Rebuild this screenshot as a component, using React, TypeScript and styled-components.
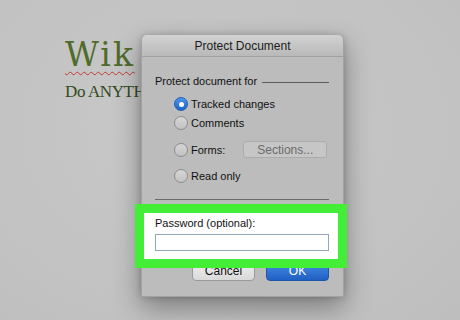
import styled, { createGlobalStyle } from 'styled-components';

const GlobalStyle = createGlobalStyle`
  html, body {
    margin: 0;
    padding: 0;
    background: #c4c4c4;
  }
  body {
    width: 460px;
    height: 320px;
    overflow: hidden;
    font-family: "Liberation Sans", Arial, sans-serif;
  }
`;

const Stage = styled.div`
  position: relative;
  width: 460px;
  height: 320px;
  box-sizing: border-box;
  padding: 38px 0 0 65px;
  background: radial-gradient(ellipse at 45% 40%, #c9c9c9 0%, #c3c3c3 60%, #bebebe 100%);
`;

// document text that sits behind the dialog
const DocArea = styled.div`
  width: 76px;
`;

const DocTitle = styled.div`
  font-family: "DejaVu Serif", "Liberation Serif", serif;
  font-size: 33px;
  line-height: 34px;
  letter-spacing: 2px;
  color: #4f6c2b;
  text-decoration: underline wavy #c0392b;
  text-decoration-thickness: 1px;
  text-underline-offset: 5px;
  white-space: nowrap;
`;

const DocSubtitle = styled.div`
  margin-top: 11px;
  font-family: "Liberation Serif", "Times New Roman", serif;
  font-size: 17px;
  line-height: 18px;
  letter-spacing: -0.4px;
  color: #34491a;
  white-space: nowrap;
`;

const Dialog = styled.div`
  position: absolute;
  left: 141px;
  top: 35px;
  width: 203px;
  height: 262px;
  box-sizing: border-box;
  background: #bcbcbc;
  border: 1px solid #a2a2a2;
  border-top: none;
  border-radius: 5px 5px 0 0;
  box-shadow: 0 10px 28px rgba(0, 0, 0, 0.38), 0 0 6px rgba(0, 0, 0, 0.18);
  display: flex;
  flex-direction: column;
`;

const TitleBar = styled.div`
  height: 22px;
  padding-top: 1px;
  box-sizing: border-box;
  border-bottom: 1px solid #a0a0a0;
  border-radius: 5px 5px 0 0;
  background: linear-gradient(#d2d2d2, #b9b9b9);
  display: flex;
  align-items: center;
  justify-content: center;
  font-size: 12px;
  color: #1b1b1b;
`;

const Body = styled.div`
  padding: 17px 14px 15px 13px;
  display: flex;
  flex-direction: column;
`;

const GroupHeader = styled.div`
  height: 14px;
  display: flex;
  align-items: center;
  font-size: 11px;
  color: #111;
  white-space: nowrap;

  &::after {
    content: '';
    flex: 1;
    height: 1px;
    margin-left: 5px;
    margin-top: 3px;
    background: #5c5c5c;
  }
`;

const RadioList = styled.div`
  margin-top: 9px;
  padding-left: 19px;
  display: flex;
  flex-direction: column;
`;

const RadioRow = styled.label<{ $gap: number; $tall?: boolean }>`
  margin-top: ${p => p.$gap}px;
  height: ${p => (p.$tall ? 17 : 14)}px;
  display: flex;
  align-items: center;
  gap: 3px;
  font-size: 11px;
  color: #111;
  white-space: nowrap;
`;

const Radio = styled.span<{ $on?: boolean }>`
  width: 14px;
  height: 14px;
  box-sizing: border-box;
  border-radius: 50%;
  flex: none;
  display: flex;
  align-items: center;
  justify-content: center;
  border: 1px solid ${p => (p.$on ? '#1f5fb8' : '#8c8c8c')};
  background: ${p =>
    p.$on ? 'linear-gradient(#4f94e8, #1f63c6)' : 'linear-gradient(#d6d6d6, #c2c2c2)'};

  &::after {
    content: '';
    display: ${p => (p.$on ? 'block' : 'none')};
    width: 5px;
    height: 5px;
    border-radius: 50%;
    background: #fff;
  }
`;

const SectionsButton = styled.span`
  margin-left: 15px;
  width: 84px;
  height: 17px;
  box-sizing: border-box;
  border: 1px solid #acacac;
  border-radius: 3px;
  background: #c6c6c6;
  display: flex;
  align-items: center;
  justify-content: center;
  font-size: 12px;
  color: #6b6b6b;
`;

const Separator = styled.div`
  margin-top: 16px;
  height: 1px;
  background: #6a6a6a;
`;

const Highlight = styled.div`
  position: relative;
  z-index: 1;
  margin: 4px -18px 0 -20px;
  border: 9px solid #42ef36;
  background: #fff;
  padding: 4px 9px 8px 11px;
  display: flex;
  flex-direction: column;
`;

const FieldLabel = styled.div`
  height: 13px;
  line-height: 13px;
  font-size: 11px;
  color: #111;
`;

const TextInput = styled.div`
  margin-top: 4px;
  height: 17px;
  box-sizing: border-box;
  border: 1px solid #92a6be;
  background: #fff;
`;

const ButtonRow = styled.div`
  margin-top: -8px;
  display: flex;
  justify-content: flex-end;
  gap: 11px;
`;

const Button = styled.span<{ $primary?: boolean }>`
  width: 63px;
  height: 21px;
  box-sizing: border-box;
  border-radius: 4px;
  display: flex;
  align-items: flex-end;
  justify-content: center;
  padding-bottom: 2px;
  font-size: 12px;
  border: 1px solid ${p => (p.$primary ? '#1c56a8' : '#9a9a9a')};
  background: ${p =>
    p.$primary ? 'linear-gradient(#4b8fe6, #1f60c4)' : 'linear-gradient(#f1f1f1, #d9d9d9)'};
  color: ${p => (p.$primary ? '#fff' : '#111')};
`;

const options = [
  { label: 'Tracked changes', on: true, gap: 0 },
  { label: 'Comments', on: false, gap: 5 },
];

export default function App() {
  return (
    <>
      <GlobalStyle />
      <Stage>
        <DocArea>
          <DocTitle>Wik</DocTitle>
          <DocSubtitle>Do ANYTH</DocSubtitle>
        </DocArea>

        <Dialog>
          <TitleBar>Protect Document</TitleBar>
          <Body>
            <GroupHeader>Protect document for</GroupHeader>
            <RadioList>
              {options.map(o => (
                <RadioRow key={o.label} $gap={o.gap}>
                  <Radio $on={o.on} />
                  {o.label}
                </RadioRow>
              ))}
              <RadioRow $gap={11} $tall>
                <Radio />
                Forms:
                <SectionsButton>Sections...</SectionsButton>
              </RadioRow>
              <RadioRow $gap={11}>
                <Radio />
                Read only
              </RadioRow>
            </RadioList>
            <Separator />
            <Highlight>
              <FieldLabel>Password (optional):</FieldLabel>
              <TextInput />
            </Highlight>
            <ButtonRow>
              <Button>Cancel</Button>
              <Button $primary>OK</Button>
            </ButtonRow>
          </Body>
        </Dialog>
      </Stage>
    </>
  );
}
